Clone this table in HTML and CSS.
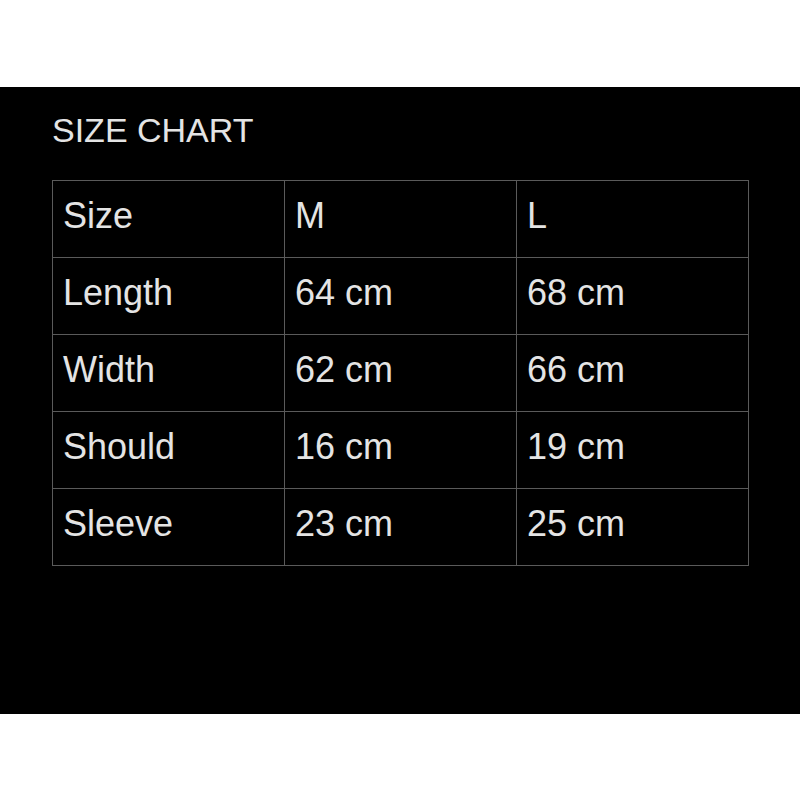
FILE: index.html
```html
<!DOCTYPE html>
<html>
<head>
<meta charset="utf-8">
<link rel="stylesheet" href="styles.css">
</head>
<body>
<div class="panel">
  <h1 class="title">SIZE CHART</h1>
  <table class="chart">
    <tr><td>Size</td><td>M</td><td>L</td></tr>
    <tr><td>Length</td><td>64 cm</td><td>68 cm</td></tr>
    <tr><td>Width</td><td>62 cm</td><td>66 cm</td></tr>
    <tr><td>Should</td><td>16 cm</td><td>19 cm</td></tr>
    <tr><td>Sleeve</td><td>23 cm</td><td>25 cm</td></tr>
  </table>
</div>
</body>
</html>
```
FILE: styles.css
```css
html, body {
  margin: 0;
  padding: 0;
  background: #ffffff;
}
body {
  padding-top: 87px;
  font-family: "Liberation Sans", Arial, sans-serif;
}
.panel {
  background: #000000;
  height: 627px;
  box-sizing: border-box;
  padding: 0 52px;
  display: flow-root;
}
.title {
  margin: 0;
  padding-top: 21px;
  font-size: 34px;
  font-weight: normal;
  line-height: 44px;
  color: #e4e4e4;
}
.chart {
  margin-top: 28px;
  width: 697px;
  border-collapse: collapse;
  table-layout: fixed;
}
.chart td {
  border: 1px solid #5a5a5a;
  height: 77px;
  box-sizing: border-box;
  padding: 0 10px 7px;
  font-size: 36px;
  color: #e4e4e4;
  vertical-align: middle;
}
```
